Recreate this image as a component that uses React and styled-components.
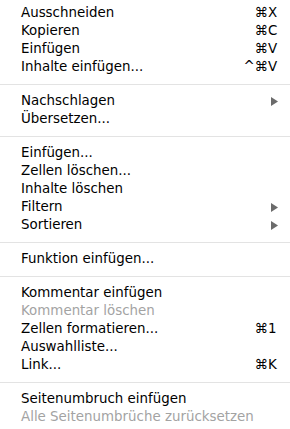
import React from "react";
import styled, { createGlobalStyle } from "styled-components";

const Global = createGlobalStyle`
  html, body { margin: 0; padding: 0; background: #fff; }
  body { font-family: "DejaVu Sans", "Liberation Sans", sans-serif; }
`;

const Menu = styled.div`
  width: 290px;
  padding: 4px 0 3px;
  box-sizing: border-box;
  background: #fff;
  font-size: 13.4px;
  color: #000;
`;

const Row = styled.div`
  display: grid;
  grid-template-columns: 1fr 46px 22px;
  align-items: center;
  height: 18px;
  padding-left: 21px;
  color: ${(p) => (p.$disabled ? "#a3a3a3" : "#000")};
  white-space: nowrap;
`;

const Label = styled.span`
  line-height: 18px;
`;

const Mods = styled.span`
  text-align: right;
  line-height: 18px;
`;

const Key = styled.span`
  text-align: left;
  line-height: 18px;
`;

const Arrow = styled.span`
  grid-column: 3;
  display: flex;
  align-items: center;
  padding-left: 3px;
`;

const Separator = styled.div`
  height: 1px;
  background: #e3e3e3;
  margin: 8px 0 7px;
`;

const Triangle = () => (
  <svg width="7" height="9" viewBox="0 0 7 9">
    <path d="M0 0 L7 4.5 L0 9 Z" fill="#6b6b6b" />
  </svg>
);

const Item = ({ label, mods, k, sub, disabled }) => (
  <Row $disabled={disabled}>
    <Label>{label}</Label>
    {sub ? (
      <Arrow>
        <Triangle />
      </Arrow>
    ) : (
      <>
        <Mods>{mods}</Mods>
        <Key>{k}</Key>
      </>
    )}
  </Row>
);

export default function App() {
  return (
    <>
      <Global />
      <Menu>
        <Item label="Ausschneiden" mods="⌘" k="X" />
        <Item label="Kopieren" mods="⌘" k="C" />
        <Item label="Einfügen" mods="⌘" k="V" />
        <Item label="Inhalte einfügen..." mods="^⌘" k="V" />
        <Separator />
        <Item label="Nachschlagen" sub />
        <Item label="Übersetzen..." />
        <Separator />
        <Item label="Einfügen..." />
        <Item label="Zellen löschen..." />
        <Item label="Inhalte löschen" />
        <Item label="Filtern" sub />
        <Item label="Sortieren" sub />
        <Separator />
        <Item label="Funktion einfügen..." />
        <Separator />
        <Item label="Kommentar einfügen" />
        <Item label="Kommentar löschen" disabled />
        <Item label="Zellen formatieren..." mods="⌘" k="1" />
        <Item label="Auswahlliste..." />
        <Item label="Link..." mods="⌘" k="K" />
        <Separator />
        <Item label="Seitenumbruch einfügen" />
        <Item label="Alle Seitenumbrüche zurücksetzen" disabled />
      </Menu>
    </>
  );
}
